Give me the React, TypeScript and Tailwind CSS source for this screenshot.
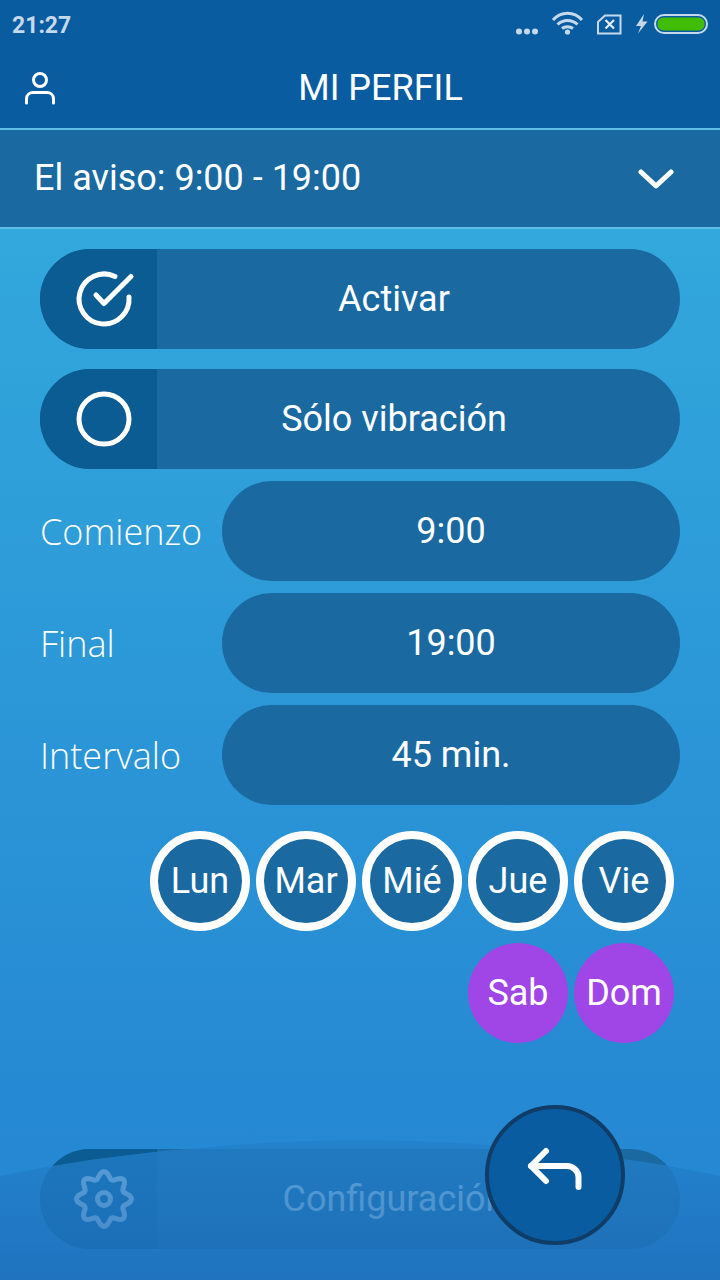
import type { ReactNode } from "react";

const ROBOTO = "font-['Roboto',sans-serif]";
const OPEN_SANS = "font-['Open_Sans',sans-serif]";

const WEEKDAYS = ["Lun", "Mar", "Mié", "Jue", "Vie"];
const WEEKEND = ["Sab", "Dom"];

const TIME_ROWS = [
  { label: "Comienzo", value: "9:00" },
  { label: "Final", value: "19:00" },
  { label: "Intervalo", value: "45 min." },
];

// wavy outline of the gear, eight rounded lobes
const GEAR_PATH =
  Array.from({ length: 160 }, (_, i) => {
    const a = (i / 160) * Math.PI * 2;
    const r = 24 + 3.4 * Math.cos(8 * a);
    const x = 32 + r * Math.sin(a);
    const y = 32 - r * Math.cos(a);
    return `${i === 0 ? "M" : "L"}${x.toFixed(2)} ${y.toFixed(2)}`;
  }).join(" ") + " Z";

function StatusBar() {
  return (
    <div className="flex h-[50px] items-center justify-between pl-3">
      <span className={`${ROBOTO} text-[23px] font-bold leading-none text-[#c6d9ea]`}>21:27</span>
      <svg width="210" height="50" viewBox="510 0 210 50" fill="none">
        {/* three dots */}
        <circle cx="519" cy="31.5" r="3" fill="#c6d9ea" />
        <circle cx="527" cy="31.5" r="3" fill="#c6d9ea" />
        <circle cx="535" cy="31.5" r="3" fill="#c6d9ea" />
        {/* wifi */}
        <path d="M553 20 C561 11 574 11 582 20" stroke="#c6d9ea" strokeWidth="3" />
        <path d="M557.5 24.5 C563 19 572 19 577.5 24.5" stroke="#c6d9ea" strokeWidth="3" />
        <path d="M562 28.5 C565 26 570 26 573 28.5" stroke="#c6d9ea" strokeWidth="3" />
        <circle cx="567.5" cy="32" r="2.6" fill="#c6d9ea" />
        {/* sim with cross */}
        <path d="M598 22 L605 15.5 H620.5 V33.5 H598 Z" stroke="#c6d9ea" strokeWidth="2" />
        <path d="M605.5 20 L614 28.5 M614 20 L605.5 28.5" stroke="#e4edf5" strokeWidth="2.2" />
        {/* bolt */}
        <path d="M644 14 L636 26 H641 L638 33.5 L647.5 21.5 H642.5 Z" fill="#c6d9ea" />
        {/* battery */}
        <rect x="655" y="15" width="52" height="18" rx="9" stroke="#c6d9ea" strokeWidth="2" />
        <rect x="657.5" y="17.5" width="47" height="13" rx="6" fill="#40bd00" />
      </svg>
    </div>
  );
}

function UserIcon() {
  return (
    <svg width="30" height="33" viewBox="0 0 30 33" fill="none" stroke="white" strokeWidth="3" strokeLinecap="round">
      <circle cx="15" cy="8" r="6.5" />
      <path d="M1.5 31 V27 C1.5 22.5 5 20.5 8 20.5 H22 C25 20.5 28.5 22.5 28.5 27 V31" />
    </svg>
  );
}

function CheckCircleIcon() {
  return (
    <svg width="62" height="62" viewBox="0 0 62 62" fill="none" stroke="white" strokeWidth="5" strokeLinecap="round" strokeLinejoin="round">
      <path d="M56 29 A25 25 0 1 1 42 8.5" />
      <path d="M23 27 L31 35.5 L58 8.5" />
    </svg>
  );
}

function CircleIcon() {
  return (
    <svg width="62" height="62" viewBox="0 0 62 62" fill="none" stroke="white" strokeWidth="5">
      <circle cx="31" cy="31" r="25" />
    </svg>
  );
}

function GearIcon() {
  return (
    <svg width="64" height="64" viewBox="0 0 64 64" fill="none" stroke="white" strokeWidth="5">
      <circle cx="32" cy="32" r="6.5" />
      <path d={GEAR_PATH} />
    </svg>
  );
}

function ToggleButton({ icon, label }: { icon: ReactNode; label: string }) {
  return (
    <div className="flex h-[100px] overflow-hidden rounded-[50px] bg-[#1a6aa1]">
      <div className="flex w-[117px] items-center justify-center bg-[#0a5c93] pl-[11px]">{icon}</div>
      <div className={`${ROBOTO} flex flex-1 items-center justify-center pr-[49px] text-[36px] text-white`}>{label}</div>
    </div>
  );
}

function DayCircle({ day, weekend }: { day: string; weekend?: boolean }) {
  return (
    <div
      className={[
        ROBOTO,
        "flex h-[100px] w-[100px] items-center justify-center rounded-full text-[36px] text-white",
        weekend ? "bg-[#a046e6]" : "border-[8px] border-white bg-[#1a6aa1]",
      ].join(" ")}
    >
      {day}
    </div>
  );
}

export default function App() {
  return (
    <div className="relative flex h-[1280px] w-[720px] flex-col overflow-hidden bg-[linear-gradient(180deg,#32a8dc_228px,#2689d3_1100px,#2587d2_1280px)]">
      {/* header */}
      <div className="h-[128px] bg-[#0a5ca0]">
        <StatusBar />
        <div className="relative flex h-[78px] items-center justify-center pb-[2px]">
          <div className="absolute left-[25px] top-[22px]">
            <UserIcon />
          </div>
          <span className={`${ROBOTO} pl-[41px] text-[36px] leading-none text-white`}>MI PERFIL</span>
        </div>
      </div>

      <div className="flex h-[101px] items-center justify-between border-y-2 border-[#5fbde6] bg-[#1a6aa1] pl-[34px] pr-[46px]">
        <span className={`${ROBOTO} pb-[2px] text-[36px] text-white`}>El aviso: 9:00 - 19:00</span>
        <svg width="36" height="20" viewBox="0 0 36 20" fill="none" stroke="white" strokeWidth="5" strokeLinecap="round" strokeLinejoin="round">
          <path d="M3 3 L18 17 L33 3" />
        </svg>
      </div>

      <div className="flex flex-col px-10 pt-5">
        <div className="flex flex-col gap-5">
          <ToggleButton icon={<CheckCircleIcon />} label="Activar" />
          <ToggleButton icon={<CircleIcon />} label="Sólo vibración" />
        </div>

        <div className="mt-3 flex flex-col gap-3">
          {TIME_ROWS.map((row) => (
            <div key={row.label} className="flex items-center justify-between">
              <span className={`${OPEN_SANS} pt-[2px] text-[36px] font-light text-white`}>{row.label}</span>
              <div className={`${ROBOTO} flex h-[100px] w-[458px] items-center justify-center rounded-[50px] bg-[#1a6aa1] text-[36px] text-white`}>
                {row.value}
              </div>
            </div>
          ))}
        </div>

        <div className="mr-[6px] mt-[26px] flex flex-col items-end gap-3">
          <div className="flex gap-[6px]">
            {WEEKDAYS.map((d) => (
              <DayCircle key={d} day={d} />
            ))}
          </div>
          <div className="flex gap-[6px]">
            {WEEKEND.map((d) => (
              <DayCircle key={d} day={d} weekend />
            ))}
          </div>
        </div>

        <div className="mt-[106px]">
          <ToggleButton icon={<GearIcon />} label="Configuración" />
        </div>
      </div>

      {/* wave lying over the last button */}
      <svg className="absolute bottom-0 left-0" width="720" height="140" viewBox="0 0 720 140">
        <defs>
          <linearGradient id="wave" x1="0" y1="0" x2="0" y2="1">
            <stop offset="0" stopColor="#2380ca" stopOpacity="0.75" />
            <stop offset="1" stopColor="#1e6fbb" stopOpacity="0.85" />
          </linearGradient>
        </defs>
        <path d="M0 36 C100 14 250 0 360 0 C470 0 620 14 720 36 V140 H0 Z" fill="url(#wave)" />
      </svg>

      {/* back button */}
      <div className="absolute left-[485px] top-[1105px] flex h-[140px] w-[140px] items-center justify-center rounded-full border-4 border-[#0f3d68] bg-[#0a5ca0]">
        <svg className="mb-[10px]" width="60" height="50" viewBox="0 0 60 50" fill="none" stroke="white" strokeWidth="6" strokeLinecap="round" strokeLinejoin="round">
          <path d="M21 6 L6 21 L21 36" />
          <path d="M6 21 H42 C48 21 53.5 26 53.5 32 V42" />
        </svg>
      </div>
    </div>
  );
}
